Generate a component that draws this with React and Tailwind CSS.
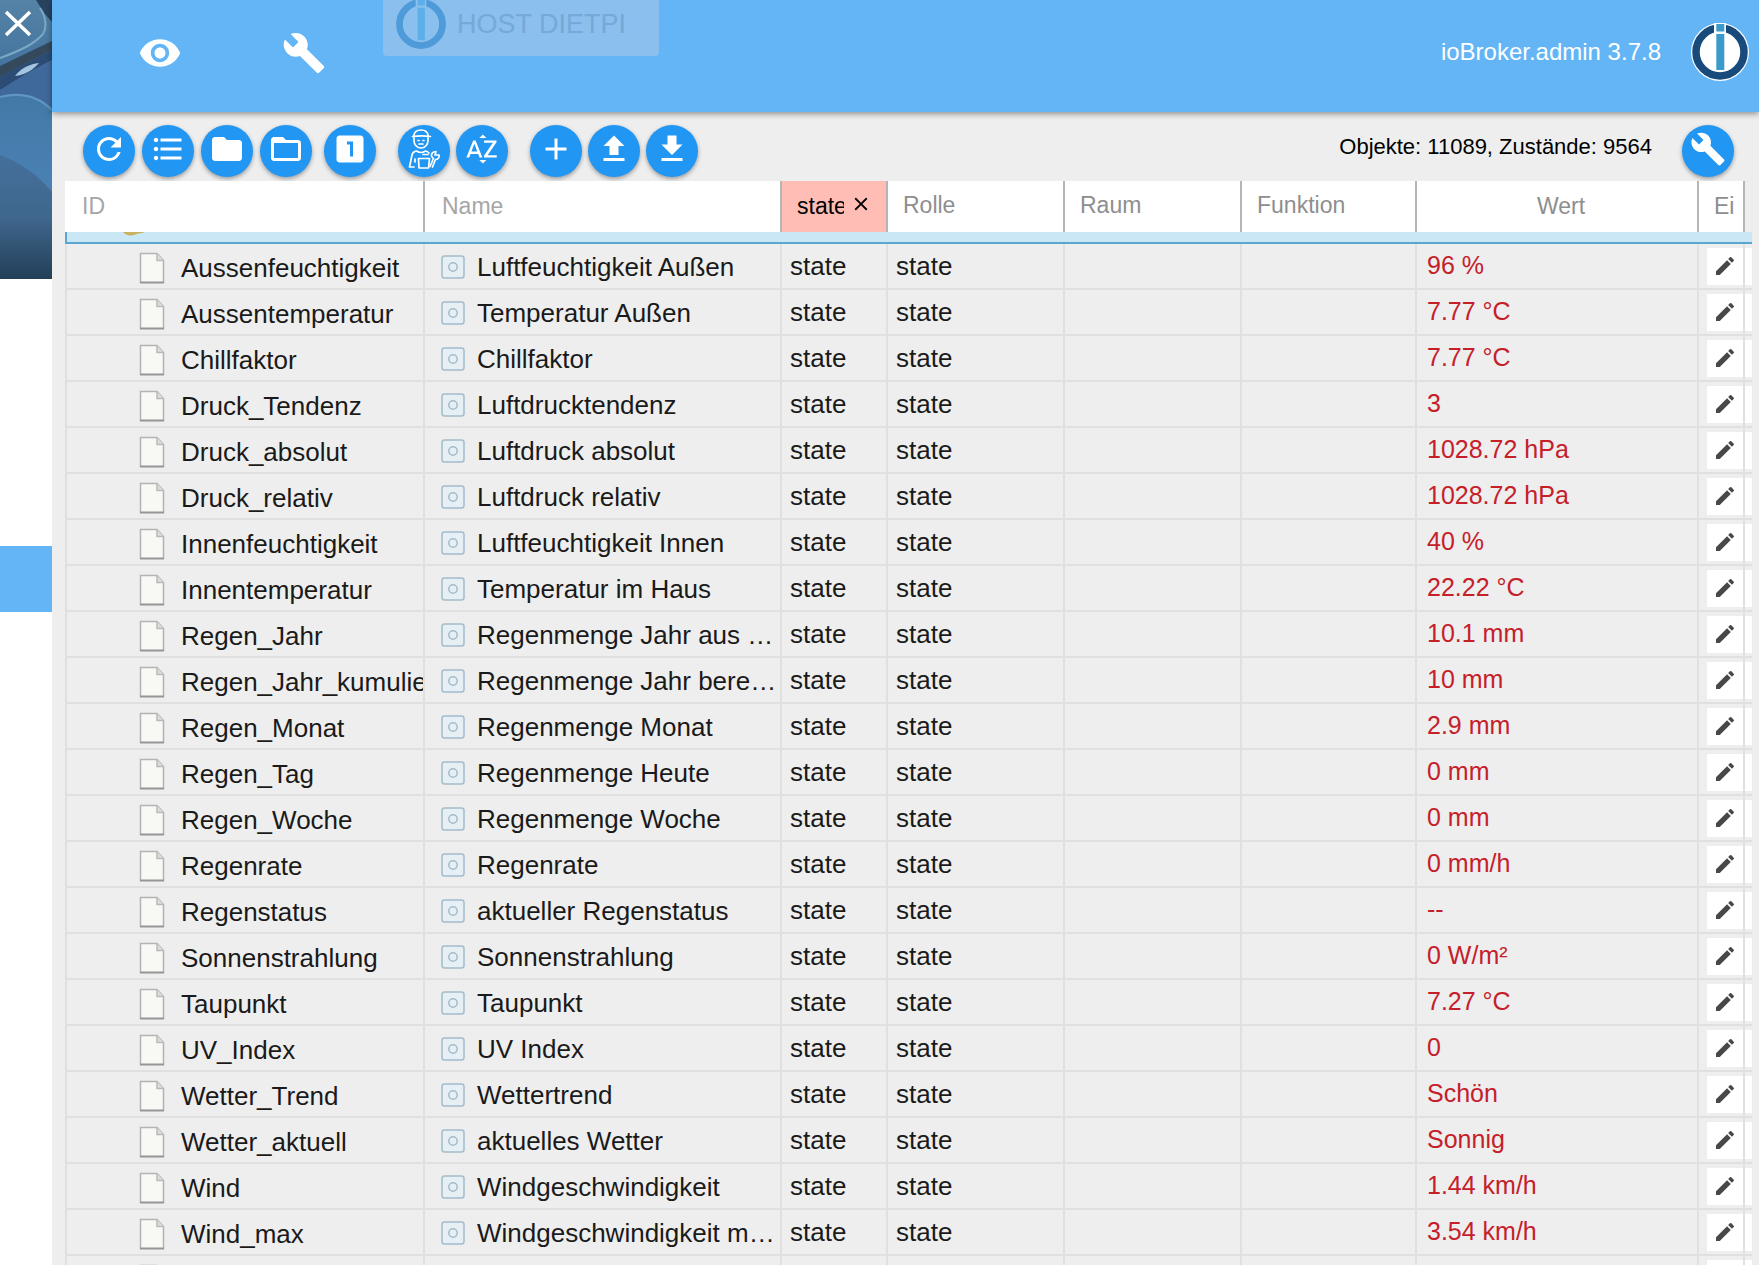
import {
  MdAdd,
  MdBuild,
  MdClose,
  MdEdit,
  MdFolder,
  MdFolderOpen,
  MdFormatListBulleted,
  MdLooksOne,
  MdRefresh,
  MdSortByAlpha,
  MdVisibility,
} from 'react-icons/md'

const objects = [
  { id: 'Aussenfeuchtigkeit', name: 'Luftfeuchtigkeit Außen', value: '96 %' },
  { id: 'Aussentemperatur', name: 'Temperatur Außen', value: '7.77 °C' },
  { id: 'Chillfaktor', name: 'Chillfaktor', value: '7.77 °C' },
  { id: 'Druck_Tendenz', name: 'Luftdrucktendenz', value: '3' },
  { id: 'Druck_absolut', name: 'Luftdruck absolut', value: '1028.72 hPa' },
  { id: 'Druck_relativ', name: 'Luftdruck relativ', value: '1028.72 hPa' },
  { id: 'Innenfeuchtigkeit', name: 'Luftfeuchtigkeit Innen', value: '40 %' },
  { id: 'Innentemperatur', name: 'Temperatur im Haus', value: '22.22 °C' },
  { id: 'Regen_Jahr', name: 'Regenmenge Jahr aus Datenbank', value: '10.1 mm' },
  { id: 'Regen_Jahr_kumuliert', name: 'Regenmenge Jahr berechnet', value: '10 mm' },
  { id: 'Regen_Monat', name: 'Regenmenge Monat', value: '2.9 mm' },
  { id: 'Regen_Tag', name: 'Regenmenge Heute', value: '0 mm' },
  { id: 'Regen_Woche', name: 'Regenmenge Woche', value: '0 mm' },
  { id: 'Regenrate', name: 'Regenrate', value: '0 mm/h' },
  { id: 'Regenstatus', name: 'aktueller Regenstatus', value: '--' },
  { id: 'Sonnenstrahlung', name: 'Sonnenstrahlung', value: '0 W/m²' },
  { id: 'Taupunkt', name: 'Taupunkt', value: '7.27 °C' },
  { id: 'UV_Index', name: 'UV Index', value: '0' },
  { id: 'Wetter_Trend', name: 'Wettertrend', value: 'Schön' },
  { id: 'Wetter_aktuell', name: 'aktuelles Wetter', value: 'Sonnig' },
  { id: 'Wind', name: 'Windgeschwindigkeit', value: '1.44 km/h' },
  { id: 'Wind_max', name: 'Windgeschwindigkeit maximal', value: '3.54 km/h' },
  { id: 'Windrichtung', name: 'Windrichtung', value: '225 °' },
]

function Logo({ className, ring, bar, fill }) {
  return (
    <svg viewBox="0 0 58 58" className={className} aria-hidden="true">
      <circle cx="29" cy="29" r="29" fill={fill} />
      <circle cx="29" cy="29" r="24" fill="none" stroke={ring} strokeWidth="7.5" />
      <path d="M23 0h12v12H23z" fill={fill} />
      <path d="M25.3 1h8v7.5h-8zM25.3 11h8v36h-8z" fill={bar} />
    </svg>
  )
}

function ExpertIcon() {
  return (
    <svg viewBox="0 0 32 40" className="h-10 w-8" fill="none" stroke="currentColor" strokeWidth="1.7" strokeLinecap="round" strokeLinejoin="round" aria-hidden="true">
      <path d="M5.500 7.500C6 3.500 9 1 13 1s7 2.500 7.500 6.500M4.500 7.500c6-1 11-1 18 0M6 8.500v3c0 4 3 7.500 7 7.500s7-3.500 7-7.500v-3" />
      <path d="M10 11.500h1M15 11.500h1M11 15h4" />
      <path d="M6 38H1.500l2.500-12c.5-2.500 2-3.500 4.500-4 3 2 6 2 9 0 1.500.3 2.500 1 3.500 2M15 25.500h5M11 39h9.500l1-9.500H10.500zM7 30v3" />
      <path d="M28 22.500c-3.500 0-5.500 3-4 5.500l1.500 1.500-3.500 8M31 26c.5 2.500-1 4.500-3.500 4.500L24.500 38M28 22.500l-1 3.500 4 0" />
    </svg>
  )
}

function UploadIcon({ className }) {
  return (
    <svg viewBox="0 0 24 24" fill="currentColor" className={className} aria-hidden="true">
      <path d="M9 16h6v-6h4l-7-7-7 7h4zm-4 2h14v2H5z" />
    </svg>
  )
}

function DownloadIcon({ className }) {
  return (
    <svg viewBox="0 0 24 24" fill="currentColor" className={className} aria-hidden="true">
      <path d="M19 9h-4V3H9v6H5l7 7 7-7zM5 18v2h14v-2H5z" />
    </svg>
  )
}

function FileIcon() {
  return (
    <svg viewBox="0 0 26 32" className="h-8 w-[26px] shrink-0" aria-hidden="true">
      <path d="M1.500 1.500H18l6.500 7v22h-23z" fill="#f8f8f5" stroke="#b3b3b3" strokeWidth="1.500" />
      <path d="M18 1.500v7h6.500" fill="#ddd" stroke="#b9b9b9" strokeWidth="1.500" />
      <path d="M1 30.500h24" stroke="#969696" strokeWidth="1.800" />
    </svg>
  )
}

function StateIcon() {
  return (
    <svg viewBox="0 0 24 24" className="size-6 shrink-0" fill="#e6eff4" stroke="#a3bccb" strokeWidth="1.500" aria-hidden="true">
      <rect x="1" y="1" width="22" height="22" rx="2.500" />
      <circle cx="12" cy="12" r="4.200" />
    </svg>
  )
}

function RoundButton({ label, children }) {
  return (
    <button
      type="button"
      aria-label={label}
      className="flex size-[52px] shrink-0 items-center justify-center rounded-full bg-[#2196f3] pb-1 text-white shadow-[0_2px_4px_rgba(0,0,0,0.35)]"
    >
      {children}
    </button>
  )
}

function Sidebar() {
  return (
    <aside className="flex w-[52px] shrink-0 flex-col bg-white">
      <div className="relative h-[279px]">
        <svg viewBox="0 0 52 279" preserveAspectRatio="none" className="size-full" aria-hidden="true">
          <defs>
            <linearGradient id="base" x1="0" y1="0" x2="0" y2="1">
              <stop offset="0" stopColor="#5583a6" />
              <stop offset="0.35" stopColor="#3c6c9c" />
              <stop offset="0.6" stopColor="#4478a6" />
              <stop offset="0.8" stopColor="#395f7e" />
              <stop offset="1" stopColor="#243f58" />
            </linearGradient>
            <linearGradient id="disc" x1="0" y1="0" x2="0" y2="1">
              <stop offset="0" stopColor="#4179a6" />
              <stop offset="0.5" stopColor="#4a81b4" />
              <stop offset="1" stopColor="#2b4c69" />
            </linearGradient>
            <linearGradient id="front" x1="0" y1="0" x2="0" y2="1">
              <stop offset="0" stopColor="#456f9c" />
              <stop offset="0.5" stopColor="#3f678d" />
              <stop offset="1" stopColor="#243f58" />
            </linearGradient>
          </defs>
          <path d="M0 0h52v279H0z" fill="url(#base)" />
          <path d="M36 0h16v22L44 13z" fill="#27435f" />
          <path d="M0 58C22 50 34 44 43 34c4-6 3-18-3-26" fill="none" stroke="#7ba8c4" strokeWidth="2" />
          <path d="M0 66l52-25v9L0 77z" fill="#34495c" />
          <path d="M0 77l52-27v10C36 68 16 80 0 90z" fill="#2c4c75" />
          <path d="M15 76c5-7 14-12 24-13-6 7-14 12-24 13z" fill="#a5c4e0" />
          <path d="M0 90c16-10 36-23 52-29v48C38 96 20 92 0 98z" fill="#40699b" />
          <path d="M0 98c20-6 38-2 52 12v169H0z" fill="url(#disc)" />
          <path d="M0 97c20-5 38-1 52 13" fill="none" stroke="#5e97bf" strokeWidth="2" />
          <path d="M0 155c22 8 40 22 52 37v87H0z" fill="url(#front)" />
        </svg>
        <button type="button" aria-label="Schließen" className="absolute top-2 left-1 text-white">
          <svg viewBox="0 0 30 30" className="size-[30px]" stroke="currentColor" strokeWidth="3.500" aria-hidden="true">
            <path d="M2 4l24 23M26 4L2 27" />
          </svg>
        </button>
      </div>
      <nav className="pt-[267px]">
        <a href="#objekte" aria-label="Objekte" className="block h-[66px] bg-[#64b5f6]" />
      </nav>
    </aside>
  )
}

function Header() {
  return (
    <header className="relative z-10 flex h-28 shrink-0 items-center bg-[#64b5f6] pr-2.5 pl-9 text-white shadow-[0_2px_6px_rgba(0,0,0,0.4)]">
      <button type="button" aria-label="Sichtbarkeit" className="flex w-36 justify-center pb-1.5">
        <MdVisibility className="size-11" />
      </button>
      <button type="button" aria-label="Einstellungen" className="flex w-36 justify-center pb-1.5">
        <MdBuild className="size-11" />
      </button>
      <div className="absolute top-0 left-[331px] flex h-14 w-[276px] items-end overflow-hidden rounded-b bg-[#8abfee] pb-1.5 pl-3 text-[#76a9d6]">
        <Logo className="size-[52px] shrink-0" ring="#4f9ad8" bar="#5cafe9" fill="#8abfee" />
        <span className="pb-2.5 pl-2.5 text-[27px] leading-8 whitespace-nowrap">HOST DIETPI</span>
      </div>
      <div className="ml-auto flex items-center gap-[30px] pb-2">
        <span className="text-[24px] leading-8">ioBroker.admin 3.7.8</span>
        <Logo className="size-[58px]" ring="#194a7c" bar="#3a9bcb" fill="#fff" />
      </div>
    </header>
  )
}

function Toolbar() {
  return (
    <div className="flex h-[69px] shrink-0 items-center pt-2 pr-[25px] pl-[31px]">
      <div className="flex gap-[7px]">
        <RoundButton label="Aktualisieren"><MdRefresh className="size-9" /></RoundButton>
        <RoundButton label="Liste"><MdFormatListBulleted className="size-9" /></RoundButton>
        <RoundButton label="Alle zuklappen"><MdFolder className="size-9" /></RoundButton>
        <RoundButton label="Alle aufklappen"><MdFolderOpen className="size-9" /></RoundButton>
      </div>
      <div className="ml-3">
        <RoundButton label="Eine Ebene"><MdLooksOne className="size-9" /></RoundButton>
      </div>
      <div className="ml-[22px] flex gap-1.5">
        <RoundButton label="Expertenmodus"><ExpertIcon /></RoundButton>
        <RoundButton label="Sortieren"><MdSortByAlpha className="size-9" /></RoundButton>
      </div>
      <div className="ml-[22px] flex gap-1.5">
        <RoundButton label="Hinzufügen"><MdAdd className="size-9" /></RoundButton>
        <RoundButton label="Hochladen"><UploadIcon className="size-9" /></RoundButton>
        <RoundButton label="Herunterladen"><DownloadIcon className="size-9" /></RoundButton>
      </div>
      <div className="ml-auto flex items-center gap-[30px]">
        <span className="pb-2 text-[22px] text-black">Objekte: 11089, Zustände: 9564</span>
        <RoundButton label="Spalten anpassen"><MdBuild className="size-9" /></RoundButton>
      </div>
    </div>
  )
}

function FilterSelect({ label }) {
  return (
    <select aria-label={label} className="w-full appearance-none bg-transparent pb-0.5 pl-[15px] text-[#8e8e8e]">
      <option>{label}</option>
    </select>
  )
}

function ObjectTable() {
  return (
    <table className="w-full table-fixed border-separate border-spacing-0 text-[25px] text-[#1a1a1a]">
      <colgroup>
        <col className="w-[360px]" />
        <col className="w-[357px]" />
        <col className="w-[106px]" />
        <col className="w-[177px]" />
        <col className="w-[177px]" />
        <col className="w-[175px]" />
        <col />
        <col className="w-[46px]" />
        <col className="w-[7px]" />
      </colgroup>
      <thead>
        <tr className="h-[51px] bg-white text-left text-[23px] text-[#8e8e8e] *:border-[#b5b5b5] *:p-0 *:font-normal">
          <th className="border-r-2">
            <input aria-label="ID" placeholder="ID" className="w-full pl-[17px] placeholder:text-[#a6a6a6]" />
          </th>
          <th className="border-r-2">
            <input aria-label="Name" placeholder="Name" className="w-full pl-[17px] placeholder:text-[#a6a6a6]" />
          </th>
          <th className="border-r-2 bg-[#ffbdb5]">
            <div className="flex items-center gap-1.5 pl-[15px] text-black">
              <input aria-label="Typ" defaultValue="state" className="w-[47px]" />
              <button type="button" aria-label="Filter löschen" className="pb-1.5">
                <MdClose className="size-[22px]" />
              </button>
            </div>
          </th>
          <th className="border-r-2"><FilterSelect label="Rolle" /></th>
          <th className="border-r-2"><FilterSelect label="Raum" /></th>
          <th className="border-r-2"><FilterSelect label="Funktion" /></th>
          <th className="border-r-2 text-center"><span className="pl-2">Wert</span></th>
          <th className="border-r-2"><span className="pl-[15px]">Ei</span></th>
          <th className="bg-[#eee]" />
        </tr>
      </thead>
      <tbody>
        <tr className="h-3 bg-[#c9e7f5] *:h-3 *:border-b-2 *:border-[#5ba7d1] *:p-0">
          <td className="border-l-2">
            <svg viewBox="0 0 24 10" className="ml-14 block h-2.5 w-6" aria-hidden="true">
              <path d="M0 0h22c-4 2-8 1-11 3-4 1-9 0-11-3z" fill="#c9b35c" />
            </svg>
          </td>
          <td colSpan={8} />
        </tr>
        {objects.map((o) => (
          <tr key={o.id} className="h-[46px] *:h-[46px] *:border-b-2 *:border-[#e0e0e0] *:p-0">
            <td className="overflow-hidden border-x-2 text-[26px]">
              <div className="flex items-center pt-1 pl-[72px]">
                <FileIcon />
                <span className="pl-4 leading-9 whitespace-nowrap">{o.id}</span>
              </div>
            </td>
            <td className="border-r-2 text-[26px]">
              <div className="flex items-center pt-0.5 pl-4">
                <StateIcon />
                <span className="truncate pl-3 leading-9">{o.name}</span>
              </div>
            </td>
            <td className="border-r-2 text-[26px]"><div className="pl-2 leading-9">state</div></td>
            <td className="border-r-2 text-[26px]"><div className="pl-2 leading-9">state</div></td>
            <td className="border-r-2" />
            <td className="border-r-2" />
            <td className="border-r-2 text-[#c5202a]"><div className="pb-0.5 pl-2.5 leading-9">{o.value}</div></td>
            <td className="border-r-2">
              <button type="button" aria-label={`${o.id} bearbeiten`} className="ml-auto flex h-[37px] w-9 items-center justify-center bg-white text-[#484848]">
                <MdEdit className="size-6" />
              </button>
            </td>
            <td><div className="h-[37px] bg-white" /></td>
          </tr>
        ))}
      </tbody>
    </table>
  )
}

export default function App() {
  return (
    <div className="flex h-screen overflow-hidden bg-[#eee] font-['Liberation_Sans',Arial,sans-serif]">
      <Sidebar />
      <div className="flex min-w-0 flex-1 flex-col">
        <Header />
        <Toolbar />
        <main className="min-h-0 flex-1 overflow-hidden pr-[7px] pl-[13px]">
          <ObjectTable />
        </main>
      </div>
    </div>
  )
}
